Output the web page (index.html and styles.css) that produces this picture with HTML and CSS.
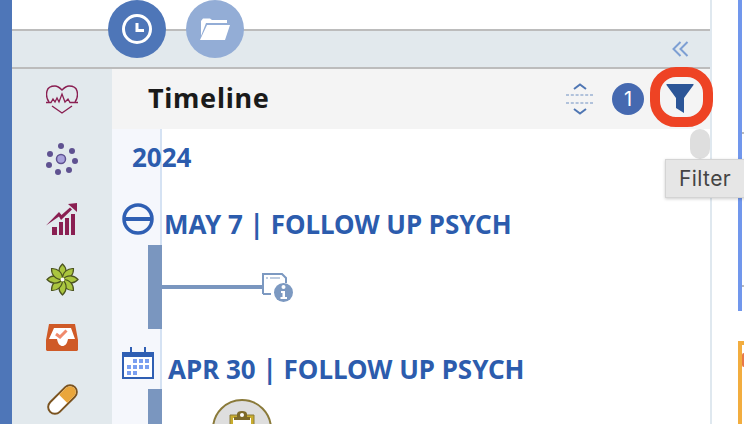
FILE: index.html
```html
<!DOCTYPE html>
<html lang="en">
<head>
<meta charset="utf-8">
<title>Timeline</title>
<link rel="stylesheet" href="styles.css">
</head>
<body>
<div class="app">
  <div class="rail"></div>
  <div class="main">
    <div class="topbar">
      <div class="tab tab-active">
        <svg width="30" height="30" viewBox="0 0 30 30"><circle cx="15" cy="15" r="13.500" fill="none" stroke="#fff" stroke-width="3"/><path d="M15 9V16.500H22" fill="none" stroke="#fff" stroke-width="3"/></svg>
      </div>
      <div class="tab tab-idle">
        <svg width="30" height="22" viewBox="0 0 30 22"><path d="M1 18V3L3 .5H10L12 2H27V5H6Z" fill="#fff"/><path d="M7 7H30L25 22H0Z" fill="#fff"/></svg>
      </div>
    </div>
    <div class="band">
      <svg class="collapse" width="17" height="16" viewBox="0 0 17 16"><path d="M8.500 1L1.500 8L8.500 15M15.500 1L8.500 8L15.500 15" fill="none" stroke="#7d9fd3" stroke-width="2"/></svg>
    </div>
    <div class="body">
      <nav class="side">
        <div class="nav-slot"><svg width="32" height="29" viewBox="0 0 32 29"><path d="M3 17C0 13 .5 8 1 6C2 2 6 1 9 1C12 1 14 3 16 5C18 3 20 1 23 1C26 1 30 2 31 6C31.500 8 32 13 29 17M6 21L16 28L26 21" fill="none" stroke="#8a1f52" stroke-width="1.400"/><path d="M0 17.500H5L7 14L9 17L11 13L13 17L16 9L19 17L22 14L24 17.500H32" fill="none" stroke="#8a1f52" stroke-width="1.300"/></svg></div>
        <div class="nav-slot"><svg width="32" height="32" viewBox="0 0 32 32"><circle cx="15" cy="3" r="3" fill="#5f5291"/><circle cx="26" cy="8" r="3" fill="#5f5291"/><circle cx="4" cy="11" r="3" fill="#5f5291"/><circle cx="29" cy="18" r="3" fill="#5f5291"/><circle cx="3" cy="22" r="3" fill="#5f5291"/><circle cx="12" cy="29" r="3" fill="#5f5291"/><circle cx="23" cy="27" r="3" fill="#5f5291"/><circle cx="15" cy="16" r="4.500" fill="#a9a3dc" stroke="#5f5291" stroke-width="1.500"/></svg></div>
        <div class="nav-slot"><svg width="32" height="32" viewBox="0 0 32 32"><path d="M0 22.500L13 9L15.500 12L24 4.500L26 6.500L15 17L13 13.500Z" fill="#8a1f52"/><path d="M22 1L31 0V9Z" fill="#8a1f52"/><path d="M6 24H11V32H6ZM13 19H17V32H13ZM19 15H23V32H19ZM25 11H29V32H25Z" fill="#8a1f52"/></svg></div>
        <div class="nav-slot"><svg width="33" height="33" viewBox="0 0 34 34"><g fill="#aac63f" stroke="#4b5320" stroke-width="1.200"><path d="M17 17C11.500 12 12.500 5 17 1C21.500 5 22.500 12 17 17Z"/><path d="M17 17C11.500 12 12.500 5 17 1C21.500 5 22.500 12 17 17Z" transform="rotate(45 17 17)"/><path d="M17 17C11.500 12 12.500 5 17 1C21.500 5 22.500 12 17 17Z" transform="rotate(90 17 17)"/><path d="M17 17C11.500 12 12.500 5 17 1C21.500 5 22.500 12 17 17Z" transform="rotate(135 17 17)"/><path d="M17 17C11.500 12 12.500 5 17 1C21.500 5 22.500 12 17 17Z" transform="rotate(180 17 17)"/><path d="M17 17C11.500 12 12.500 5 17 1C21.500 5 22.500 12 17 17Z" transform="rotate(225 17 17)"/><path d="M17 17C11.500 12 12.500 5 17 1C21.500 5 22.500 12 17 17Z" transform="rotate(270 17 17)"/><path d="M17 17C11.500 12 12.500 5 17 1C21.500 5 22.500 12 17 17Z" transform="rotate(315 17 17)"/></g><circle cx="17" cy="17" r="2" fill="#fff"/></svg></div>
        <div class="nav-slot nav-slot-up"><svg width="32" height="27" viewBox="0 0 32 27"><path d="M3 0H29L32 16V26L31 27H1L0 26V16Z" fill="#cf5a27"/><path d="M8 4H25L29 15H22C21 20 19 22 16.500 22C14 22 12 20 11 15H3Z" fill="#fff"/><path d="M10 10L14 13L20.500 6.500" fill="none" stroke="#f08a6c" stroke-width="3"/></svg></div>
        <div class="nav-slot"><svg width="33" height="33" viewBox="0 0 34 34"><g transform="rotate(-45 17 17)"><rect x="-1" y="10" width="36" height="14" rx="7" fill="#fff" stroke="#7a5320" stroke-width="2"/><path d="M18 11H28A6 6 0 0 1 28 23H18Z" fill="#e9a63c"/></g></svg></div>
      </nav>
      <section class="panel">
        <header class="panel-head">
          <h1 class="title">Timeline</h1>
          <svg class="expand" width="28" height="32" viewBox="0 0 28 32"><path d="M8 6L14 1.500L20 6M8 26L14 30.500L20 26" fill="none" stroke="#4f76b3" stroke-width="2"/><path d="M0 12H28M0 20H28" fill="none" stroke="#6f8fc1" stroke-width="1.200" stroke-dasharray="3 1.800"/></svg>
          <span class="count">1</span>
          <span class="filter">
            <svg width="28" height="29" viewBox="0 0 28 29"><path d="M1 0H27Q28 0 27.500 1L18 14V29L10 24V14L.5 1Q0 0 1 0Z" fill="#2b5597"/></svg>
          </span>
        </header>
        <div class="timeline">
          <div class="year">2024</div>
          <div class="event">
            <svg class="event-icon" width="32" height="32" viewBox="0 0 32 32"><circle cx="16" cy="16" r="14" fill="none" stroke="#2f5fb3" stroke-width="3.500"/><path d="M2 16H30" stroke="#2f5fb3" stroke-width="4"/></svg>
            <h2 class="event-title">MAY 7 | FOLLOW UP PSYCH</h2>
          </div>
          <div class="track">
            <span class="bar"></span>
            <span class="branch"></span>
            <svg class="note" width="32" height="30" viewBox="0 0 32 30"><path d="M1 21V1H20L24 5V10M1 21H9" fill="none" stroke="#7c99c1" stroke-width="2"/><path d="M4 5H6M8 5H18" stroke="#7c99c1" stroke-width="1"/><circle cx="21.500" cy="19.500" r="9.500" fill="#7c99c1"/><circle cx="21.500" cy="14" r="2" fill="#fff"/><path d="M19 18H23V24H25V26H18.500V24H20.500V20H19Z" fill="#fff"/></svg>
          </div>
          <div class="event event-second">
            <svg class="event-icon" width="32" height="32" viewBox="0 0 32 32"><path d="M0 5H8V0H10V5H22V0H24V5H32V32H0Z" fill="#2f5fb3"/><rect x="2" y="10" width="28" height="20" fill="#fff"/><path d="M11 12H15V16H11ZM17 12H21V16H17ZM23 12H27V16H23ZM5 18H9V22H5ZM11 18H15V22H11ZM17 18H21V22H17ZM23 18H27V22H23ZM5 24H9V28H5ZM11 24H15V28H11Z" fill="#7a9ff0"/></svg>
            <h2 class="event-title">APR 30 | FOLLOW UP PSYCH</h2>
          </div>
          <div class="track">
            <span class="bar"></span>
            <span class="badge">
              <svg width="26" height="24" viewBox="0 0 26 24"><path d="M1 4H25V24H1Z" fill="#c9ad2e" stroke="#8a7a3a"/><path d="M4 7H22V24H4Z" fill="#fff"/><path d="M8 6V3C8 1 10 0 13 0C16 0 18 1 18 3V6H21V9H5V6Z" fill="#7d6a2a"/><circle cx="13" cy="4" r="2" fill="#fff"/></svg>
            </span>
          </div>
        </div>
      </section>
    </div>
  </div>
  <aside class="right">
    <div class="right-blue"></div>
    <div class="right-orange"><span class="right-dot"></span></div>
  </aside>
</div>
<div class="scroll-thumb"></div>
<div class="tooltip">Filter</div>
</body>
</html>
```

FILE: styles.css
```css
* { box-sizing: border-box; }
html, body { margin: 0; height: 100%; overflow: hidden; background: #fff; }
body { font-family: "Noto Sans", sans-serif; }
.app { display: flex; width: 744px; height: 424px; overflow: hidden; }
.rail { width: 12px; flex: none; background: #4e76b8; }
.main { width: 698px; flex: none; display: flex; flex-direction: column; }
.topbar { height: 29px; flex: none; display: flex; gap: 20px; padding-left: 96px; position: relative; z-index: 1; }
.tab { width: 58px; height: 58px; flex: none; border-radius: 50%; display: flex; align-items: center; justify-content: center; }
.tab-active { background: #4e76b8; }
.tab-idle { background: #93add6; }
.band { height: 40px; flex: none; background: #e2e9ed; border-top: 2px solid #bcbcbc; border-bottom: 2px solid #bcbcbc; display: flex; justify-content: flex-end; align-items: center; padding-right: 21px; }
.body { flex: 1; min-height: 0; display: flex; }
.side { width: 100px; flex: none; background: #e2e9ed; display: flex; flex-direction: column; align-items: center; }
.nav-slot { height: 60px; flex: none; display: flex; align-items: center; justify-content: center; }
.nav-slot-up { padding-bottom: 3px; }
.panel { flex: 1; min-width: 0; display: flex; flex-direction: column; }
.panel-head { height: 60px; flex: none; background: #f4f4f4; display: flex; align-items: center; padding-left: 36px; }
.title { margin: 0 auto 3px 0; font-size: 27px; font-weight: 700; color: #1a1a1a; letter-spacing: 0.7px; }
.expand { flex: none; margin-right: 18px; }
.count { width: 32px; height: 32px; flex: none; border-radius: 50%; background: #4569b0; color: #fff; font-family: "Inter", sans-serif; font-size: 20px; display: flex; align-items: center; justify-content: center; margin-right: 6px; }
.filter { width: 63px; height: 60px; flex: none; align-self: flex-start; margin: -2px -3px 0 0; position: relative; z-index: 2; border: 10px solid #ee4324; border-radius: 26px; display: flex; align-items: center; justify-content: center; padding: 3px 3px 0 0; }
.timeline { flex: 1; min-height: 0; background: linear-gradient(to right, #f5f7fc 48px, #d5e2f3 48px, #d5e2f3 50px, #fff 50px); }
.year { font-size: 26px; font-weight: 700; color: #2c5cad; padding: 11px 0 0 20px; height: 74px; line-height: 35px; }
.event { height: 42px; display: flex; align-items: flex-start; gap: 10px; padding-left: 10px; }
.event-second { gap: 14px; }
.event-icon { flex: none; }
.event-title { margin: 5px 0 0; font-size: 26px; line-height: 32px; font-weight: 700; color: #2c5cad; white-space: nowrap; }
.event-second .event-title { margin-top: 6px; }
.track { position: relative; height: 84px; margin-bottom: 18px; }
.bar { position: absolute; left: 36px; top: 0; width: 14px; height: 100%; background: #7a96bf; }
.branch { position: absolute; left: 50px; top: 40px; width: 100px; height: 4px; background: #7a96bf; }
.note { position: absolute; left: 150px; top: 28px; }
.badge { position: absolute; left: 100px; top: 10px; width: 60px; height: 60px; border-radius: 50%; background: #dedede; border: 2px solid #8a7a3a; display: flex; justify-content: center; padding-top: 10px; }
.right { flex: 1; border-left: 2px solid #dfe8ef; padding-left: 26px; }
.right-blue { width: 6px; height: 311px; border-left: 4px solid #7197ec; background: linear-gradient(#bcbcbc, #bcbcbc) right 132px / 2px 2px no-repeat, linear-gradient(#bcbcbc, #bcbcbc) right 285px / 2px 2px no-repeat; }
.right-orange { width: 6px; height: 83px; margin-top: 30px; border-left: 4px solid #f2ad3f; border-top: 4px solid #f2ad3f; display: flex; padding-top: 8px; }
.right-dot { width: 2px; height: 14px; border-radius: 2px 0 0 2px; background: #e8784a; }
.scroll-thumb { position: absolute; left: 690px; top: 129px; width: 20px; height: 30px; border-radius: 10px; background: #dedede; }
.tooltip { position: absolute; left: 665px; top: 159px; width: 90px; height: 39px; padding: 6px 13px; background: #e6e6e6; border: 1px solid #d4d4d4; font-family: "Inter", sans-serif; font-size: 21px; letter-spacing: 0.4px; line-height: 26px; color: #444; box-shadow: 0 1px 3px rgba(0,0,0,0.2); }
```
